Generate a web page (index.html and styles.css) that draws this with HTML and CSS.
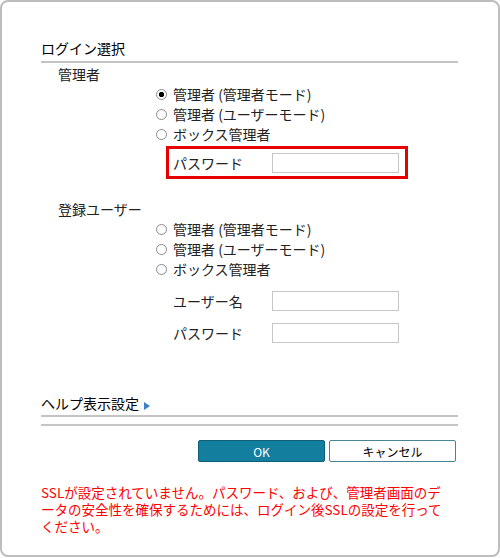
FILE: index.html
```html
<!DOCTYPE html>
<html lang="ja">
<head>
    <meta charset="UTF-8">
    <meta name="viewport" content="width=device-width, initial-scale=1.0">
    <title>ログイン</title>
    <link rel="stylesheet" href="styles.css">
</head>
<body>

    <div class="frame">
        <div class="login-panel">
            <h2 class="section-title">ログイン選択</h2>

            <div class="group">
                <div class="group-label">管理者</div>
                <div class="choices">
                    <label class="choice"><input type="radio" name="admin-mode" checked>管理者 (管理者モード)</label>
                    <label class="choice"><input type="radio" name="admin-mode">管理者 (ユーザーモード)</label>
                    <label class="choice"><input type="radio" name="admin-mode">ボックス管理者</label>
                </div>
                <div class="field-row password-box">
                    <span class="field-label">パスワード</span>
                    <input type="password" class="text-input">
                </div>
            </div>

            <div class="group group-user">
                <div class="group-label">登録ユーザー</div>
                <div class="choices">
                    <label class="choice"><input type="radio" name="user-mode">管理者 (管理者モード)</label>
                    <label class="choice"><input type="radio" name="user-mode">管理者 (ユーザーモード)</label>
                    <label class="choice"><input type="radio" name="user-mode">ボックス管理者</label>
                </div>
                <div class="fields">
                    <div class="field-row">
                        <span class="field-label">ユーザー名</span>
                        <input type="text" class="text-input">
                    </div>
                    <div class="field-row">
                        <span class="field-label">パスワード</span>
                        <input type="password" class="text-input">
                    </div>
                </div>
            </div>

            <h2 class="section-title help-title">ヘルプ表示設定<svg class="arrow" width="6" height="8" viewBox="0 0 6 8"><polygon points="0,0 6,4 0,8" fill="#3b7fc6"/></svg></h2>
            <div class="rule"></div>

            <div class="buttons">
                <button class="btn btn-ok">OK</button>
                <button class="btn btn-cancel">キャンセル</button>
            </div>

            <p class="warning">SSLが設定されていません。パスワード、および、管理者画面のデ<br>ータの安全性を確保するためには、ログイン後SSLの設定を行って<br>ください。</p>
        </div>
    </div>

</body>
</html>
```

FILE: styles.css
```css
body {
    margin: 0;
    font-family: "Noto Sans CJK JP", "Noto Sans", sans-serif;
    background-color: #fff;
    color: #222;
}
.frame {
    width: 500px;
    height: 557px;
    box-sizing: border-box;
    border: 2px solid #bdbdbd;
    border-radius: 8px;
}
.login-panel {
    padding: 36px 40px 0 39px;
}
.section-title {
    margin: 0;
    padding-bottom: 3px;
    font-size: 14px;
    font-weight: normal;
    line-height: 20px;
    color: #000;
    border-bottom: 2px solid #c4c4c4;
}
.group-label {
    margin: 1px 0 0 17px;
    font-size: 14px;
    line-height: 20px;
}
.group-user .group-label {
    margin-top: 20px;
}
.choices {
    margin-left: 115px;
}
.choice {
    display: flex;
    align-items: center;
    height: 20px;
    font-size: 14px;
}
.choice input {
    appearance: none;
    width: 11px;
    height: 11px;
    margin: 0 6px 0 0;
    border: 1px solid #8c8c8c;
    border-radius: 50%;
    background: #fff;
}
.choice input:checked {
    background: radial-gradient(circle, #000 0 2.4px, #fff 3px);
}
.field-row {
    display: flex;
    align-items: center;
    margin-left: 132px;
    height: 20px;
    font-size: 14px;
}
.field-label {
    width: 99px;
}
.text-input {
    width: 127px;
    height: 20px;
    box-sizing: border-box;
    margin: 0;
    padding: 0 3px;
    border: 1px solid #c6c6c6;
    background: #fff;
}
.password-box {
    width: 242px;
    height: 33px;
    box-sizing: border-box;
    margin: 2px 0 0 125px;
    padding: 0 6px 0 4px;
    border: 3px solid #e60000;
}
.fields {
    margin-top: 12px;
}
.fields .field-row + .field-row {
    margin-top: 12px;
}
.help-title {
    margin-top: 50px;
    padding-bottom: 2px;
}
.arrow {
    margin-left: 5px;
    vertical-align: -1px;
}
.rule {
    margin-top: 7px;
    border-top: 2px solid #c4c4c4;
}
.buttons {
    display: flex;
    justify-content: flex-end;
    gap: 4px;
    margin: 14px 2px 0 0;
}
.btn {
    width: 127px;
    height: 22px;
    padding: 0;
    border-radius: 2px;
    font-family: inherit;
    font-size: 12px;
    cursor: pointer;
}
.btn-ok {
    background-color: #147e9e;
    border: 1px solid #0d5f78;
    color: #fff;
}
.btn-cancel {
    background-color: #fff;
    border: 1px solid #4a8296;
    color: #000;
}
.warning {
    margin: 22px 0 0;
    font-size: 13.5px;
    line-height: 17px;
    color: #ff0000;
}
```
